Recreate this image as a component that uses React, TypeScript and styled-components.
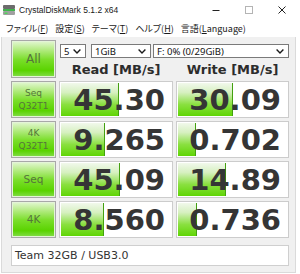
import React from "react";
import styled, { createGlobalStyle } from "styled-components";

const GlobalStyle = createGlobalStyle`
  html, body {
    margin: 0;
    padding: 0;
    background: #ffffff;
  }
  body {
    width: 300px;
    height: 274px;
    overflow: hidden;
  }
  * {
    box-sizing: border-box;
  }
`;

const Window = styled.div`
  width: 300px;
  height: 274px;
  background: #ffffff;
  display: flex;
  flex-direction: column;
`;

const TitleBar = styled.div`
  height: 20px;
  display: flex;
  align-items: center;
  padding-left: 3px;
`;

const TitleText = styled.span`
  margin-left: 4px;
  font-family: "Liberation Sans", Arial, sans-serif;
  font-size: 8.5px;
  color: #1a1a1a;
`;

const Controls = styled.div`
  margin-left: auto;
  margin-right: 2px;
  height: 100%;
  display: flex;
`;

const ControlButton = styled.div`
  width: 33px;
  height: 100%;
  display: flex;
  align-items: center;
  justify-content: center;
`;

const MenuBar = styled.div`
  height: 17px;
  display: flex;
  align-items: center;
  padding-left: 2.5px;
  font-family: "Noto Sans CJK JP", "Liberation Sans", sans-serif;
  font-size: 9px;
  font-feature-settings: "palt";
  color: #1a1a1a;
`;

const MenuItem = styled.span`
  padding: 0 3.5px;
  u {
    text-decoration-thickness: 1px;
    text-underline-offset: 1px;
  }
`;

const Panel = styled.div`
  margin-left: 1px;
  width: 295px;
  height: 236px;
  background: #f0f0f0;
  border: 1px solid #dadada;
  border-top: none;
  padding: 3px 0 0 9px;
  display: grid;
  grid-template-columns: 45px 114px 113px;
  grid-template-rows: 38px repeat(4, 37px) 21px;
  column-gap: 3px;
  row-gap: 3px;
`;

const LabelButton = styled.div<{ $size: number }>`
  border: 1px solid #a8a8a8;
  box-shadow: inset 0 0 0 1px #e4f4d8;
  background: linear-gradient(
    to bottom,
    #e4f7d4 0%,
    #b8ec8a 22%,
    #7ade2a 52%,
    #5ad300 82%,
    #84de4c 100%
  );
  display: flex;
  flex-direction: column;
  align-items: center;
  justify-content: center;
  font-family: "DejaVu Sans", Verdana, sans-serif;
  font-size: ${({ $size }) => $size}px;
  line-height: 1.35;
  color: #55753b;
`;

const TopRight = styled.div`
  grid-column: 2 / 4;
  display: flex;
  flex-direction: column;
`;

const ComboRow = styled.div`
  margin-top: 4px;
  margin-left: 1px;
  height: 14px;
  display: flex;
`;

const Combo = styled.div<{ $width?: number; $gap?: number }>`
  ${({ $width }) => ($width ? `width: ${$width}px;` : "flex: 1;")}
  margin-right: ${({ $gap }) => $gap ?? 0}px;
  height: 100%;
  background: #ffffff;
  border: 1px solid #7a7a7a;
  display: flex;
  align-items: center;
  justify-content: space-between;
  padding: 0 4px 0 3px;
  font-family: "Noto Sans", "Liberation Sans", sans-serif;
  font-size: 9.5px;
  color: #111111;
`;

const HeaderRow = styled.div`
  flex: 1;
  display: grid;
  grid-template-columns: 114px 113px;
  column-gap: 3px;
  padding-top: 2px;
`;

const Header = styled.div`
  display: flex;
  align-items: center;
  justify-content: center;
  font-family: "DejaVu Sans", Verdana, sans-serif;
  font-weight: bold;
  font-size: 13px;
  color: #2c2c2c;
`;

const ResultCell = styled.div<{ $bar: number }>`
  border: 1px solid #cccccc;
  background-color: #ffffff;
  background-image: linear-gradient(#43a010, #43a010),
    linear-gradient(
      to bottom,
      #f4f9f0 0%,
      #d6f0c0 30%,
      #8ae040 64%,
      #5cd400 100%
    );
  background-repeat: no-repeat;
  background-size: 1px 100%, ${({ $bar }) => $bar}px 100%;
  background-position: ${({ $bar }) => $bar}px 0, 0 0;
  box-shadow: inset 0 0 0 1px #ffffff;
  display: flex;
  align-items: center;
  justify-content: flex-end;
  padding-right: 7px;
  font-family: "DejaVu Sans", Verdana, sans-serif;
  font-weight: bold;
  font-size: 29px;
  color: #353535;
`;

const Comment = styled.div`
  grid-column: 1 / -1;
  margin-top: 4px;
  height: 21px;
  background: #ffffff;
  border: 1px solid #cfcfcf;
  display: flex;
  align-items: center;
  padding-left: 3px;
  font-family: "DejaVu Sans", Verdana, sans-serif;
  font-size: 11px;
  color: #333333;
`;

const DriveIcon = () => (
  <svg width="12" height="12" viewBox="0 0 12 12">
    <rect x="0" y="1" width="12" height="4" rx="1" fill="#6c6c6c" />
    <rect x="0" y="5" width="12" height="2" fill="#3fb44c" />
    <rect x="0" y="7" width="12" height="4" rx="1" fill="#a0a0a0" />
    <rect x="1.5" y="8.5" width="3" height="1.5" fill="#4fd45a" />
  </svg>
);

const Chevron = () => (
  <svg width="8" height="5" viewBox="0 0 8 5">
    <polyline
      points="0.6,0.6 4,4 7.4,0.6"
      fill="none"
      stroke="#1a1a1a"
      strokeWidth="1.4"
    />
  </svg>
);

const rows = [
  { label: ["Seq", "Q32T1"], read: "45.30", readBar: 58, write: "30.09", writeBar: 55 },
  { label: ["4K", "Q32T1"], read: "9.265", readBar: 44, write: "0.702", writeBar: 18 },
  { label: ["Seq"], read: "45.09", readBar: 59, write: "14.89", writeBar: 48 },
  { label: ["4K"], read: "8.560", readBar: 43, write: "0.736", writeBar: 19 },
];

export default function App() {
  return (
    <>
      <GlobalStyle />
      <Window>
        <TitleBar>
          <DriveIcon />
          <TitleText>CrystalDiskMark 5.1.2 x64</TitleText>
          <Controls>
            <ControlButton>
              <svg width="8" height="8" viewBox="0 0 8 8">
                <line x1="0.5" y1="4.5" x2="7.5" y2="4.5" stroke="#222" strokeWidth="1" />
              </svg>
            </ControlButton>
            <ControlButton>
              <svg width="8" height="8" viewBox="0 0 8 8">
                <rect x="0.5" y="0.5" width="7" height="7" fill="none" stroke="#b4b4b4" strokeWidth="1" />
              </svg>
            </ControlButton>
            <ControlButton>
              <svg width="8" height="8" viewBox="0 0 8 8">
                <path d="M0.5 0.5 L7.5 7.5 M7.5 0.5 L0.5 7.5" stroke="#222" strokeWidth="1" />
              </svg>
            </ControlButton>
          </Controls>
        </TitleBar>

        <MenuBar>
          <MenuItem>ファイル(<u>F</u>)</MenuItem>
          <MenuItem>設定(<u>S</u>)</MenuItem>
          <MenuItem>テーマ(<u>T</u>)</MenuItem>
          <MenuItem>ヘルプ(<u>H</u>)</MenuItem>
          <MenuItem>言語(<u>L</u>anguage)</MenuItem>
        </MenuBar>

        <Panel>
          <LabelButton $size={12}>All</LabelButton>
          <TopRight>
            <ComboRow>
              <Combo $width={26} $gap={5}>
                5<Chevron />
              </Combo>
              <Combo $width={60} $gap={2}>
                1GiB<Chevron />
              </Combo>
              <Combo>
                F: 0% (0/29GiB)<Chevron />
              </Combo>
            </ComboRow>
            <HeaderRow>
              <Header>Read [MB/s]</Header>
              <Header>Write [MB/s]</Header>
            </HeaderRow>
          </TopRight>

          {rows.map((row) => (
            <React.Fragment key={row.label.join("-") + row.read}>
              <LabelButton $size={row.label.length > 1 ? 9 : 10.5}>
                {row.label.map((line) => (
                  <span key={line}>{line}</span>
                ))}
              </LabelButton>
              <ResultCell $bar={row.readBar}>{row.read}</ResultCell>
              <ResultCell $bar={row.writeBar}>{row.write}</ResultCell>
            </React.Fragment>
          ))}

          <Comment>Team 32GB / USB3.0</Comment>
        </Panel>
      </Window>
    </>
  );
}
